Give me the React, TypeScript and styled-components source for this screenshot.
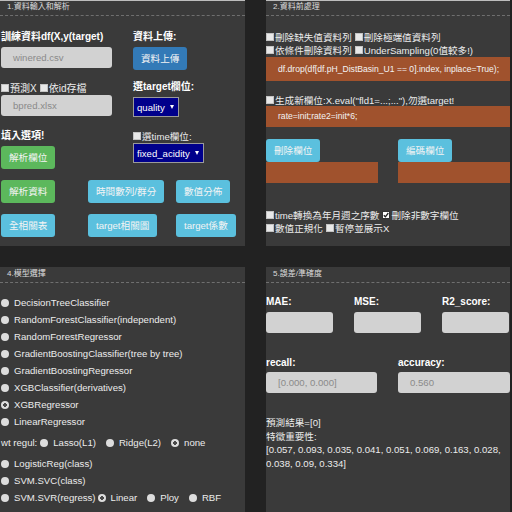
import React from "react";
import styled, { createGlobalStyle, css } from "styled-components";

const Global = createGlobalStyle`
  html, body { margin: 0; padding: 0; background: #222222; }
  body { font-family: "Liberation Sans", "Noto Sans CJK TC", Arial, sans-serif; color: #ececec; }
  * { box-sizing: border-box; }
`;

const Page = styled.div`
  display: grid;
  grid-template-columns: 245px 244px;
  grid-template-rows: 246px 245px;
  column-gap: 21px;
  row-gap: 21px;
  width: 512px;
  height: 512px;
  overflow: hidden;
`;

const Panel = styled.section<{ $top?: boolean }>`
  background: #3a3a3a;
  display: flex;
  flex-direction: column;
  overflow: hidden;
  ${(p) => p.$top && css`box-shadow: inset 0 1px 0 #bdbdbd;`}
`;

const Header = styled.div`
  height: 16px;
  line-height: 14px;
  padding-left: 7px;
  font-size: 8px;
  color: #dcdcdc;
  border-bottom: 1px dashed #6f6f6f;
  flex: none;
`;

const Body = styled.div<{ $pt: number; $pl?: number }>`
  padding-top: ${(p) => p.$pt}px;
  padding-left: ${(p) => p.$pl ?? 0}px;
  font-size: 9.6px;
`;

const Label = styled.div<{ $mt?: number }>`
  font-weight: bold;
  font-size: 10px;
  line-height: 12px;
  color: #ffffff;
  white-space: nowrap;
  margin-top: ${(p) => p.$mt ?? 0}px;
`;

const Field = styled.div`
  display: flex;
  flex-direction: column;
  align-items: flex-start;
`;

const TextBox = styled.div<{ $w: number; $mt?: number }>`
  width: ${(p) => p.$w}px;
  height: 21px;
  margin-top: ${(p) => p.$mt ?? 0}px;
  background: #d2d2d2;
  border-radius: 3px;
  color: #8a8a8a;
  font-size: 9.6px;
  line-height: 21px;
  padding-left: 12px;
  white-space: nowrap;
`;

const btnColors = {
  blue: "#337ab7",
  green: "#5cb85c",
  cyan: "#5bc0de",
};

const Button = styled.button<{ $c: keyof typeof btnColors; $mt?: number }>`
  height: 23px;
  padding: 0 8px;
  margin-top: ${(p) => p.$mt ?? 0}px;
  border: none;
  border-radius: 3px;
  background: ${(p) => btnColors[p.$c]};
  color: #f4f4f4;
  font-family: inherit;
  font-size: 9.6px;
  line-height: 23px;
  white-space: nowrap;
  justify-self: start;
  align-self: start;
`;

const SelectBox = styled.div<{ $mt?: number }>`
  display: inline-flex;
  align-items: center;
  gap: 5px;
  height: 20px;
  padding: 0 4px 0 3px;
  margin-top: ${(p) => p.$mt ?? 0}px;
  background: #00008b;
  border: 1px solid #9a9a9a;
  color: #ffffff;
  font-size: 9.6px;
  white-space: nowrap;
`;

const Caret = styled.span`
  display: inline-block;
  width: 0;
  height: 0;
  border-left: 2.5px solid transparent;
  border-right: 2.5px solid transparent;
  border-top: 4px solid #ffffff;
`;

const Box = styled.span<{ $checked?: boolean }>`
  display: inline-block;
  width: 8px;
  height: 8px;
  margin-right: 1px;
  background: ${(p) => (p.$checked ? "#ffffff" : "#e8e8e8")};
  border: 1px solid ${(p) => (p.$checked ? "#333" : "#c4c4c4")};
  position: relative;
  vertical-align: -1px;
  flex: none;
`;

const CheckLine = styled.div<{ $mt?: number; $bold?: boolean }>`
  display: flex;
  align-items: center;
  height: 13px;
  margin-top: ${(p) => p.$mt ?? 0}px;
  font-size: ${(p) => (p.$bold ? 10 : 9.6)}px;
  color: #ececec;
  white-space: nowrap;
`;

const CheckItem = styled.span`
  display: inline-flex;
  align-items: center;
  margin-right: 3px;
`;

const Check: React.FC<{ checked?: boolean; children: React.ReactNode }> = ({ checked, children }) => (
  <CheckItem>
    <Box $checked={checked}>
      {checked && (
        <svg width="6" height="6" viewBox="0 0 6 6" style={{ position: "absolute", left: 0, top: 0 }}>
          <path d="M0.8 3.2 L2.4 4.8 L5.3 1" stroke="#222" strokeWidth="1.3" fill="none" />
        </svg>
      )}
    </Box>
    {children}
  </CheckItem>
);

/* Panel 1 */
const TopGrid = styled.div`
  display: grid;
  grid-template-columns: 132px 1fr;
  row-gap: 11px;
`;

const ButtonGrid = styled.div<{ $cols: string; $mt: number }>`
  display: grid;
  grid-template-columns: ${(p) => p.$cols};
  row-gap: 11px;
  margin-top: ${(p) => p.$mt}px;
`;

/* Panel 2 */
const CodeBar = styled.div<{ $h: number; $mt?: number }>`
  height: ${(p) => p.$h}px;
  margin-top: ${(p) => p.$mt ?? 0}px;
  background: #a0522d;
  color: #f3f3f3;
  font-size: 8.6px;
  line-height: ${(p) => p.$h}px;
  padding-left: 12px;
  white-space: nowrap;
  overflow: hidden;
`;

const TwoCols = styled.div<{ $mt: number }>`
  display: grid;
  grid-template-columns: 112px 112px;
  column-gap: 20px;
  margin-top: ${(p) => p.$mt}px;
`;

const ColStack = styled.div`
  display: flex;
  flex-direction: column;
  align-items: flex-start;
`;

const FullBar = styled.div`
  align-self: stretch;
  height: 21px;
  background: #a0522d;
`;

/* Panel 4 */
const RadioRow = styled.div<{ $my?: number }>`
  display: flex;
  align-items: center;
  height: 17px;
  margin: ${(p) => p.$my ?? 0}px 0;
  font-size: 9.6px;
  color: #ececec;
  white-space: nowrap;
`;

const Dot = styled.span<{ $on?: boolean }>`
  display: inline-block;
  width: 8px;
  height: 8px;
  border-radius: 50%;
  background: #dddddd;
  margin-right: 5px;
  flex: none;
  ${(p) =>
    p.$on &&
    css`
      background: radial-gradient(circle, #4a4a4a 0 1.6px, #dddddd 2px);
    `}
`;

const RadioItem = styled.span<{ $ml?: number }>`
  display: inline-flex;
  align-items: center;
  margin-left: ${(p) => p.$ml ?? 0}px;
`;

const Radio: React.FC<{ on?: boolean; ml?: number; children: React.ReactNode }> = ({ on, ml, children }) => (
  <RadioItem $ml={ml}>
    <Dot $on={on} />
    {children}
  </RadioItem>
);

/* Panel 5 */
const MetricGrid = styled.div<{ $cols: string; $gap: number; $mt?: number }>`
  display: grid;
  grid-template-columns: ${(p) => p.$cols};
  column-gap: ${(p) => p.$gap}px;
  margin-top: ${(p) => p.$mt ?? 0}px;
`;

const ResultText = styled.div`
  margin-top: 23px;
  font-size: 9.6px;
  line-height: 13.5px;
  color: #ececec;
  padding-right: 6px;
`;

export default function App() {
  return (
    <>
      <Global />
      <Page>
        <Panel $top>
          <Header>1.資料輸入和解析</Header>
          <Body $pt={15} $pl={1}>
            <TopGrid>
              <Field>
                <Label>訓練資料df(X,y(target)</Label>
                <TextBox $w={111} $mt={4}>winered.csv</TextBox>
              </Field>
              <Field>
                <Label>資料上傳:</Label>
                <Button $c="blue" $mt={4}>資料上傳</Button>
              </Field>
              <Field>
                <CheckLine $bold>
                  <Check>預測X</Check>
                  <Check>依id存檔</Check>
                </CheckLine>
                <TextBox $w={111} $mt={1}>bpred.xlsx</TextBox>
              </Field>
              <Field>
                <Label>選target欄位:</Label>
                <SelectBox $mt={4}>
                  quality <Caret />
                </SelectBox>
              </Field>
              <Field>
                <Label $mt={2}>填入選項!</Label>
                <Button $c="green" $mt={4}>解析欄位</Button>
              </Field>
              <Field>
                <CheckLine $mt={1}>
                  <Check>選time欄位:</Check>
                </CheckLine>
                <SelectBox $mt={1}>
                  fixed_acidity <Caret />
                </SelectBox>
              </Field>
            </TopGrid>
            <ButtonGrid $cols="87px 88px 1fr" $mt={11}>
              <Button $c="green">解析資料</Button>
              <Button $c="cyan">時間數列/群分</Button>
              <Button $c="cyan">數值分佈</Button>
              <Button $c="cyan">全相關表</Button>
              <Button $c="cyan">target相關圖</Button>
              <Button $c="cyan">target係數</Button>
            </ButtonGrid>
          </Body>
        </Panel>

        <Panel $top>
          <Header>2.資料前處理</Header>
          <Body $pt={14}>
            <CheckLine>
              <Check>刪除缺失值資料列</Check>
              <Check>刪除極端值資料列</Check>
            </CheckLine>
            <CheckLine>
              <Check>依條件刪除資料列</Check>
              <Check>UnderSampling(0值較多!)</Check>
            </CheckLine>
            <CodeBar $h={24} $mt={1}>
              df.drop(df[df.pH_DistBasin_U1 == 0].index, inplace=True);
            </CodeBar>
            <CheckLine $mt={12}>
              <Check>生成新欄位:X.eval("fld1=...;..."),勿選target!</Check>
            </CheckLine>
            <CodeBar $h={21}>rate=init;rate2=init*6;</CodeBar>
            <TwoCols $mt={12}>
              <ColStack>
                <Button $c="cyan">刪除欄位</Button>
                <FullBar />
              </ColStack>
              <ColStack>
                <Button $c="cyan">編碼欄位</Button>
                <FullBar />
              </ColStack>
            </TwoCols>
            <CheckLine $mt={25}>
              <Check>time轉換為年月週之序數</Check>
              <Check checked>刪除非數字欄位</Check>
            </CheckLine>
            <CheckLine>
              <Check>數值正規化</Check>
              <Check>暫停並展示X</Check>
            </CheckLine>
          </Body>
        </Panel>

        <Panel>
          <Header>4.模型選擇</Header>
          <Body $pt={11} $pl={1}>
            <RadioRow><Radio>DecisionTreeClassifier</Radio></RadioRow>
            <RadioRow><Radio>RandomForestClassifier(independent)</Radio></RadioRow>
            <RadioRow><Radio>RandomForestRegressor</Radio></RadioRow>
            <RadioRow><Radio>GradientBoostingClassifier(tree by tree)</Radio></RadioRow>
            <RadioRow><Radio>GradientBoostingRegressor</Radio></RadioRow>
            <RadioRow><Radio>XGBClassifier(derivatives)</Radio></RadioRow>
            <RadioRow><Radio on>XGBRegressor</Radio></RadioRow>
            <RadioRow><Radio>LinearRegressor</Radio></RadioRow>
            <RadioRow $my={4}>
              wt regul:
              <Radio ml={3}>Lasso(L1)</Radio>
              <Radio ml={10}>Ridge(L2)</Radio>
              <Radio on ml={10}>none</Radio>
            </RadioRow>
            <RadioRow><Radio>LogisticReg(class)</Radio></RadioRow>
            <RadioRow><Radio>SVM.SVC(class)</Radio></RadioRow>
            <RadioRow>
              <Radio>SVM.SVR(regress)</Radio>
              <Radio on ml={2}>Linear</Radio>
              <Radio ml={10}>Ploy</Radio>
              <Radio ml={10}>RBF</Radio>
            </RadioRow>
          </Body>
        </Panel>

        <Panel>
          <Header>5.誤差/準確度</Header>
          <Body $pt={13}>
            <MetricGrid $cols="67px 67px 67px" $gap={21}>
              <Field>
                <Label>MAE:</Label>
                <TextBox $w={67} $mt={4} />
              </Field>
              <Field>
                <Label>MSE:</Label>
                <TextBox $w={67} $mt={4} />
              </Field>
              <Field>
                <Label>R2_score:</Label>
                <TextBox $w={67} $mt={4} />
              </Field>
            </MetricGrid>
            <MetricGrid $cols="111px 112px" $gap={21} $mt={24}>
              <Field>
                <Label>recall:</Label>
                <TextBox $w={111} $mt={3}>[0.000, 0.000]</TextBox>
              </Field>
              <Field>
                <Label>accuracy:</Label>
                <TextBox $w={112} $mt={3}>0.560</TextBox>
              </Field>
            </MetricGrid>
            <ResultText>
              預測結果=[0]
              <br />
              特徵重要性:
              <br />
              [0.057, 0.093, 0.035, 0.041, 0.051, 0.069, 0.163, 0.028, 0.038, 0.09, 0.334]
            </ResultText>
          </Body>
        </Panel>
      </Page>
    </>
  );
}
